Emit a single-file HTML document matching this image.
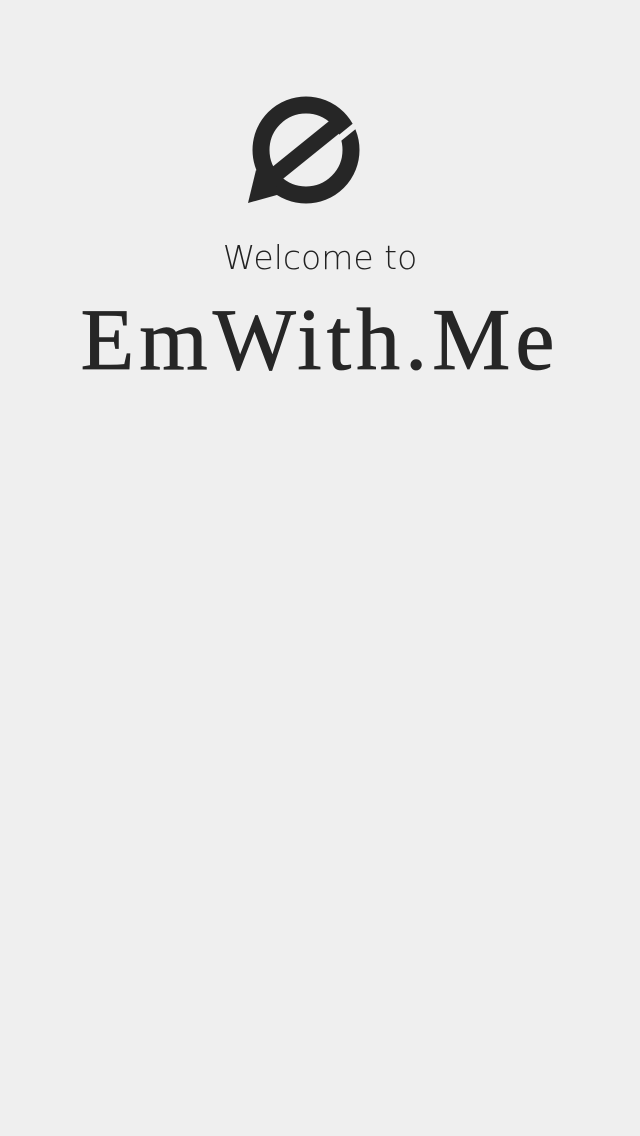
<!DOCTYPE html>
<html><head><meta charset="utf-8"><style>
html,body{margin:0;padding:0;}
body{width:640px;height:1136px;background:#efefef;position:relative;overflow:hidden;}
.w{position:absolute;left:0;width:640px;text-align:center;top:238px;font:300 33px "DejaVu Sans","Liberation Sans",sans-serif;color:#222;}
.t{position:absolute;left:0;width:640px;text-align:center;top:290px;font:88px "Liberation Serif",serif;color:#262626;letter-spacing:5px;-webkit-text-stroke:0.8px #262626;}
</style></head><body>
<svg width="640" height="240" style="position:absolute;left:0;top:0">
  <circle cx="306" cy="150" r="45" fill="none" stroke="#262626" stroke-width="17"/>
  <polygon points="248,203 256,170 284,193" fill="#262626"/>
  <line x1="333" y1="143.6" x2="362" y2="120" stroke="#efefef" stroke-width="6"/>
  <line x1="265.5" y1="182.7" x2="346.5" y2="117.3" stroke="#262626" stroke-width="16"/>
</svg>
<div class="w">Welcome to</div>
<div class="t">EmWith.Me</div>
</body></html>
